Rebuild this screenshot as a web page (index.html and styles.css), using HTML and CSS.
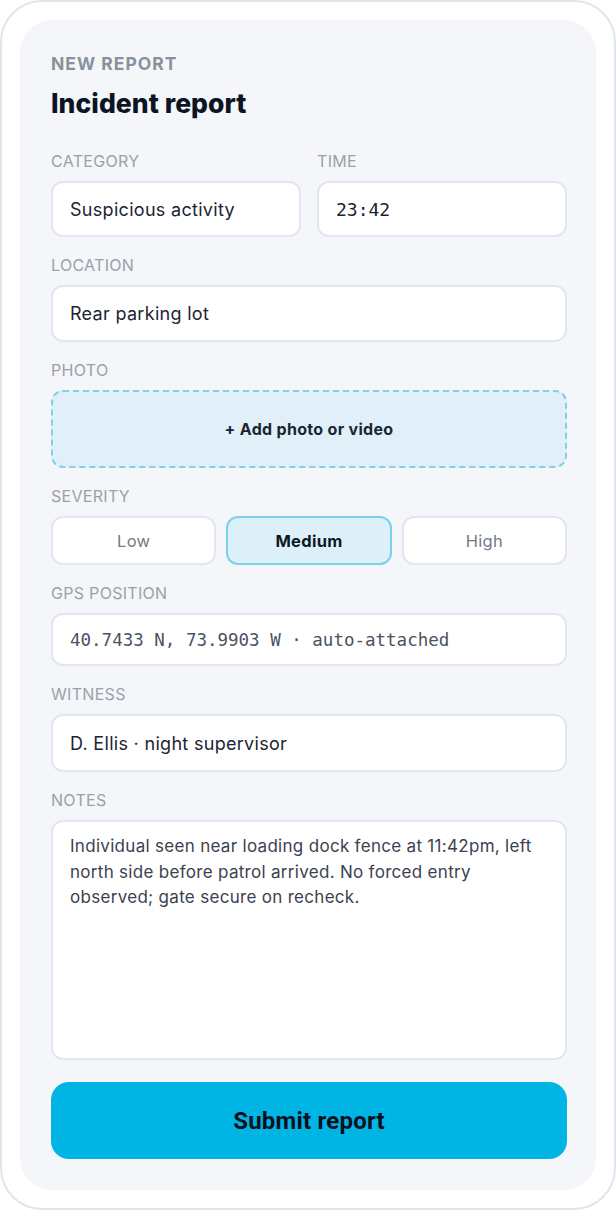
FILE: index.html
```html
<!DOCTYPE html>
<html lang="en">
<head>
<meta charset="utf-8">
<title>Incident report</title>
<link rel="stylesheet" href="styles.css">
</head>
<body>
<div class="frame">
  <div class="panel">
    <div class="eyebrow">NEW REPORT</div>
    <h1 class="title">Incident report</h1>

    <div class="row-2">
      <div class="field">
        <div class="label">CATEGORY</div>
        <div class="input">Suspicious activity</div>
      </div>
      <div class="field">
        <div class="label">TIME</div>
        <div class="input mono">23:42</div>
      </div>
    </div>

    <div class="field">
      <div class="label">LOCATION</div>
      <div class="input input-tall">Rear parking lot</div>
    </div>

    <div class="field">
      <div class="label">PHOTO</div>
      <div class="dropzone">+ Add photo or video</div>
    </div>

    <div class="field">
      <div class="label">SEVERITY</div>
      <div class="segments">
        <div class="seg">Low</div>
        <div class="seg seg-active">Medium</div>
        <div class="seg">High</div>
      </div>
    </div>

    <div class="field">
      <div class="label">GPS POSITION</div>
      <div class="input gps">40.7433 N, 73.9903 W · auto-attached</div>
    </div>

    <div class="field">
      <div class="label">WITNESS</div>
      <div class="input input-witness">D. Ellis · night supervisor</div>
    </div>

    <div class="field field-last">
      <div class="label">NOTES</div>
      <div class="notes">Individual seen near loading dock fence at 11:42pm, left north side before patrol arrived. No forced entry observed; gate secure on recheck.</div>
    </div>

    <div class="submit">Submit report</div>
  </div>
</div>
</body>
</html>
```
FILE: styles.css
```css
html, body {
  margin: 0;
  padding: 0;
  background: #ffffff;
}
body {
  font-family: Inter, "Noto Sans", sans-serif;
  color: #111827;
}
.frame {
  box-sizing: border-box;
  width: 616px;
  height: 1210px;
  border: 2px solid #e1e5ee;
  border-radius: 42px;
  background: #ffffff;
  padding: 18px;
}
.panel {
  box-sizing: border-box;
  height: 100%;
  background: #f4f6fa;
  border-radius: 32px;
  padding: 34px 29px 31px 31px;
  display: flex;
  flex-direction: column;
}
.panel > * {
  flex-shrink: 0;
}
.eyebrow {
  font-size: 17.5px;
  line-height: 20px;
  font-weight: 700;
  letter-spacing: 1px;
  color: #8a919a;
}
.title {
  margin: 12px 0 31px 0;
  font-size: 26.5px;
  line-height: 34px;
  font-weight: 800;
  letter-spacing: 0.05px;
  color: #0c1424;
}
.row-2 {
  display: grid;
  grid-template-columns: 1fr 1fr;
  gap: 16px;
}
.field {
  display: flex;
  flex-direction: column;
  margin-bottom: 18px;
}
.field-last {
  margin-bottom: 0;
}
.label {
  font-size: 16px;
  line-height: 20px;
  letter-spacing: 0.3px;
  color: #9aa1aa;
  margin-bottom: 10px;
}
.input {
  box-sizing: border-box;
  height: 56px;
  background: #ffffff;
  border: 2px solid #e2e6ee;
  border-radius: 12px;
  padding: 0 17px;
  display: flex;
  align-items: center;
  font-size: 18px;
  letter-spacing: 0.3px;
  color: #1c2433;
}
.input-tall {
  height: 57px;
}
.input-witness {
  height: 58px;
}
.mono {
  font-family: "DejaVu Sans Mono", "Liberation Mono", monospace;
  font-size: 18px;
  letter-spacing: 0;
}
.gps {
  height: 53px;
  font-family: "DejaVu Sans Mono", "Liberation Mono", monospace;
  font-size: 17.5px;
  letter-spacing: 0;
  color: #4b5360;
}
.dropzone {
  box-sizing: border-box;
  height: 78px;
  background: #e1f0f8;
  border: 2px dashed #7fd1e8;
  border-radius: 12px;
  display: flex;
  align-items: center;
  justify-content: center;
  font-size: 16px;
  font-weight: 700;
  letter-spacing: 0.3px;
  color: #1c2433;
}
.segments {
  display: grid;
  grid-template-columns: 1fr 1fr 1fr;
  gap: 10px;
}
.seg {
  box-sizing: border-box;
  height: 49px;
  background: #ffffff;
  border: 2px solid #e2e6ee;
  border-radius: 12px;
  display: flex;
  align-items: center;
  justify-content: center;
  font-size: 16.5px;
  letter-spacing: 0.3px;
  color: #737a85;
}
.seg-active {
  background: #ddf0fa;
  border-color: #7dd0e9;
  color: #0f1726;
  font-weight: 700;
}
.notes {
  box-sizing: border-box;
  height: 240px;
  background: #ffffff;
  border: 2px solid #e2e6ee;
  border-radius: 12px;
  padding: 12px 17px;
  font-size: 17px;
  line-height: 25.5px;
  letter-spacing: 0.3px;
  color: #3a4250;
}
.submit {
  margin-top: 22px;
  height: 77px;
  border-radius: 18px;
  background: #00b5e4;
  display: flex;
  align-items: center;
  justify-content: center;
  font-family: Roboto, "Liberation Sans", sans-serif;
  font-size: 24px;
  font-weight: 700;
  letter-spacing: 0.2px;
  color: #0a1020;
}
```
